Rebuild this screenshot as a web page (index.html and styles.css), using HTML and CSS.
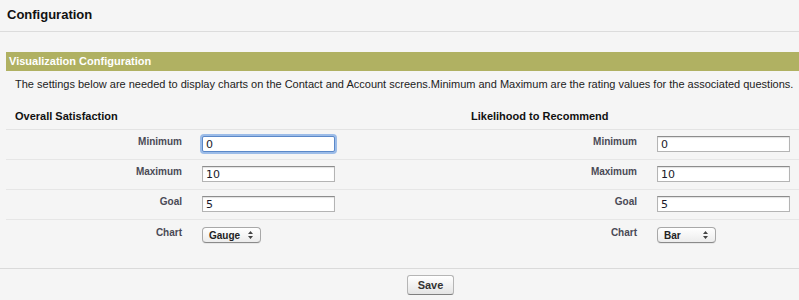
FILE: index.html
```html
<!DOCTYPE html>
<html lang="en">
<head>
    <meta charset="UTF-8">
    <meta name="viewport" content="width=device-width, initial-scale=1.0">
    <title>Configuration</title>
    <link rel="stylesheet" href="styles.css">
</head>
<body>
    <!-- Page title -->
    <header class="page-header">
        <h1>Configuration</h1>
    </header>

    <div class="block">
        <div class="subheader">Visualization Configuration</div>
        <p class="intro">The settings below are needed to display charts on the Contact and Account screens.Minimum and Maximum are the rating values for the associated questions.</p>

        <div class="row titles">
            <h3 class="section-title">Overall Satisfaction</h3>
            <h3 class="section-title">Likelihood to Recommend</h3>
        </div>

        <div class="row">
            <label class="label">Minimum</label>
            <div class="data"><input type="text" class="field focused" value="0"></div>
            <label class="label">Minimum</label>
            <div class="data"><input type="text" class="field" value="0"></div>
        </div>
        <div class="row">
            <label class="label">Maximum</label>
            <div class="data"><input type="text" class="field" value="10"></div>
            <label class="label">Maximum</label>
            <div class="data"><input type="text" class="field" value="10"></div>
        </div>
        <div class="row">
            <label class="label">Goal</label>
            <div class="data"><input type="text" class="field" value="5"></div>
            <label class="label">Goal</label>
            <div class="data"><input type="text" class="field" value="5"></div>
        </div>
        <div class="row last">
            <label class="label">Chart</label>
            <div class="data">
                <div class="select">
                    <span>Gauge</span>
                    <svg width="5" height="8" viewBox="0 0 5 8"><path d="M2.5 0 L5 3 L0 3 Z M2.5 8 L5 5 L0 5 Z" fill="#444"/></svg>
                </div>
            </div>
            <label class="label">Chart</label>
            <div class="data">
                <div class="select">
                    <span>Bar</span>
                    <svg width="5" height="8" viewBox="0 0 5 8"><path d="M2.5 0 L5 3 L0 3 Z M2.5 8 L5 5 L0 5 Z" fill="#444"/></svg>
                </div>
            </div>
        </div>
    </div>

    <div class="buttons">
        <button class="btn">Save</button>
    </div>
</body>
</html>
```

FILE: styles.css
```css
* {
    margin: 0;
    padding: 0;
    box-sizing: border-box;
}

html {
    overflow: hidden;
}

body {
    width: 861px;
    background: #f5f5f5;
    font-family: 'Liberation Sans', Arial, sans-serif;
    color: #222;
}

.page-header {
    padding: 7px 7px 8px;
    border-bottom: 1px solid #dcdcdc;
}

.page-header h1 {
    font-size: 13px;
    line-height: 16px;
    font-weight: bold;
    color: #111;
}

.block {
    margin: 20px 6px 0;
}

.subheader {
    height: 19px;
    line-height: 19px;
    padding-left: 3px;
    background: #b0b162;
    color: #fff;
    font-size: 11px;
    font-weight: bold;
}

.intro {
    margin-top: 5px;
    padding-left: 9px;
    font-size: 11px;
    line-height: 16px;
    white-space: nowrap;
    color: #222;
}

.row {
    display: grid;
    grid-template-columns: 186px 269px 186px 1fr;
    height: 30px;
    border-bottom: 1px solid #e6e6e6;
}

.row.titles {
    grid-template-columns: 455px 1fr;
    height: auto;
    padding: 17px 0 6px;
    border-bottom-color: #e3e3e3;
}

.row.last {
    height: 48px;
    border-bottom: none;
}

.section-title {
    padding-left: 9px;
    font-size: 11px;
    line-height: 14px;
    font-weight: bold;
    color: #111;
}

.section-title + .section-title {
    padding-left: 10px;
}

.label {
    padding: 6px 10px 0;
    text-align: right;
    font-size: 10px;
    line-height: 12px;
    font-weight: bold;
    color: #4a4a56;
}

.row.last .label {
    padding-top: 7px;
}

.data {
    padding: 6px 10px 0;
}

.field {
    display: block;
    width: 133px;
    height: 16px;
    padding: 1px 3px 0;
    border: 1px solid #b4b4b4;
    border-top-color: #8c8c8c;
    background: #fff;
    box-shadow: inset 0 1px 1px rgba(0, 0, 0, 0.12);
    font-family: 'DejaVu Sans', sans-serif;
    font-size: 11px;
    color: #1a1a2a;
    outline: none;
}

.field.focused {
    border-color: #5b88c8;
    box-shadow: 0 0 0 2px #9cbce8;
    border-radius: 2px;
}

.row.last .data {
    padding-top: 7px;
}

.select {
    display: flex;
    align-items: center;
    justify-content: space-between;
    width: 59px;
    height: 16px;
    padding: 0 7px 0 6px;
    border: 1px solid #a8a8a8;
    border-bottom-color: #8a8a8a;
    border-radius: 4px;
    background: linear-gradient(#ffffff, #ececec);
    box-shadow: 0 1px 0 rgba(0, 0, 0, 0.06);
    font-size: 10px;
    font-weight: bold;
    color: #222;
}

.buttons {
    border-top: 1px solid #dadada;
    padding-top: 6px;
    text-align: center;
}

.btn {
    width: 47px;
    height: 20px;
    border: 1px solid #b5b5b5;
    border-bottom-color: #7f7f7f;
    border-radius: 3px;
    background: linear-gradient(#ffffff, #e4e4e4);
    font-family: 'Liberation Sans', Arial, sans-serif;
    font-size: 11px;
    font-weight: bold;
    color: #333;
    cursor: pointer;
}
```
